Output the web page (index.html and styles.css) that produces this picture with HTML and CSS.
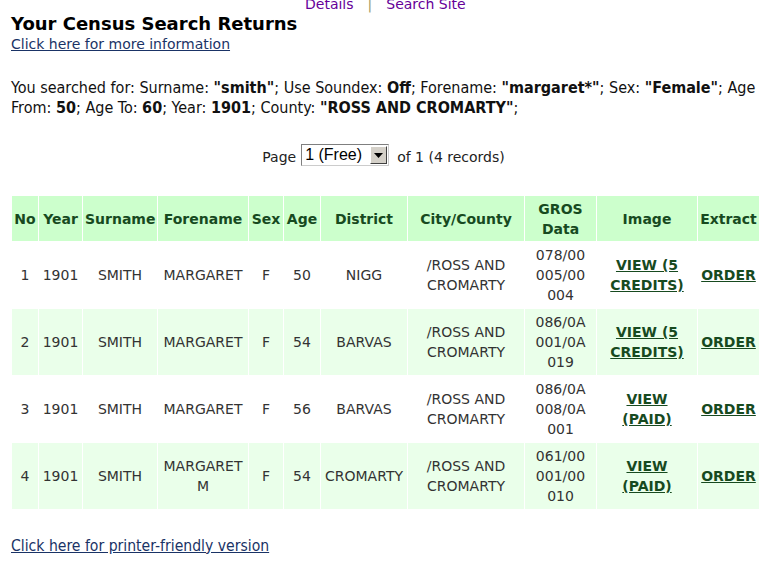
FILE: index.html
```html
<!DOCTYPE html>
<html>
<head>
<meta charset="utf-8">
<title>Your Census Search Returns</title>
<link rel="stylesheet" href="styles.css">
</head>
<body>
<div class="page">
  <div class="topnav">
    <a href="#" class="navlink">Details</a>
    <span class="sep">|</span>
    <a href="#" class="navlink">Search Site</a>
  </div>
  <h1 class="title">Your Census Search Returns</h1>
  <a href="#" class="infolink">Click here for more information</a>

  <p class="searched">You searched for: Surname: <b>"smith"</b>; Use Soundex: <b>Off</b>; Forename: <b>"margaret*"</b>; Sex: <b>"Female"</b>; Age From: <b>50</b>; Age To: <b>60</b>; Year: <b>1901</b>; County: <b>"ROSS AND CROMARTY"</b>;</p>

  <div class="pager">
    <span class="ptext">Page</span>
    <span class="select"><span class="selval">1 (Free)</span><span class="selbtn"><svg width="9" height="5" viewBox="0 0 9 5"><path d="M0 0H9L4.5 5Z" fill="#000"/></svg></span></span>
    <span class="ptext">of 1 (4 records)</span>
  </div>

  <table class="results">
    <thead>
      <tr>
        <th class="c-no">No</th>
        <th class="c-year">Year</th>
        <th class="c-sur">Surname</th>
        <th class="c-fore">Forename</th>
        <th class="c-sex">Sex</th>
        <th class="c-age">Age</th>
        <th class="c-dist">District</th>
        <th class="c-city">City/County</th>
        <th class="c-gros">GROS<br>Data</th>
        <th class="c-img">Image</th>
        <th class="c-ext">Extract</th>
      </tr>
    </thead>
    <tbody>
      <tr class="odd">
        <td>1</td><td>1901</td><td>SMITH</td><td>MARGARET</td><td>F</td><td>50</td><td>NIGG</td>
        <td>/ROSS AND<br>CROMARTY</td><td>078/00<br>005/00<br>004</td>
        <td><a href="#" class="act">VIEW (5<br>CREDITS)</a></td><td><a href="#" class="act">ORDER</a></td>
      </tr>
      <tr class="even">
        <td>2</td><td>1901</td><td>SMITH</td><td>MARGARET</td><td>F</td><td>54</td><td>BARVAS</td>
        <td>/ROSS AND<br>CROMARTY</td><td>086/0A<br>001/0A<br>019</td>
        <td><a href="#" class="act">VIEW (5<br>CREDITS)</a></td><td><a href="#" class="act">ORDER</a></td>
      </tr>
      <tr class="odd">
        <td>3</td><td>1901</td><td>SMITH</td><td>MARGARET</td><td>F</td><td>56</td><td>BARVAS</td>
        <td>/ROSS AND<br>CROMARTY</td><td>086/0A<br>008/0A<br>001</td>
        <td><a href="#" class="act">VIEW<br>(PAID)</a></td><td><a href="#" class="act">ORDER</a></td>
      </tr>
      <tr class="even">
        <td>4</td><td>1901</td><td>SMITH</td><td>MARGARET<br>M</td><td>F</td><td>54</td><td>CROMARTY</td>
        <td>/ROSS AND<br>CROMARTY</td><td>061/00<br>001/00<br>010</td>
        <td><a href="#" class="act">VIEW<br>(PAID)</a></td><td><a href="#" class="act">ORDER</a></td>
      </tr>
    </tbody>
  </table>

  <a href="#" class="printlink">Click here for printer-friendly version</a>
</div>
</body>
</html>
```

FILE: styles.css
```css
html, body {
  margin: 0;
  padding: 0;
  background: #ffffff;
}

.page {
  padding: 0 13px 0 11px;
  font-family: "DejaVu Sans", Verdana, sans-serif;
  font-size: 14px;
  color: #222222;
}

.topnav {
  margin-top: -4px;
  height: 14px;
  line-height: 17px;
  padding-left: 294px;
  display: flex;
  gap: 14px;
  font-size: 14px;
}

.navlink {
  color: #660099;
  text-decoration: none;
}

.sep {
  color: #999966;
}

.title {
  margin: 4px 0 0 0;
  font-size: 18px;
  line-height: 20px;
  font-weight: bold;
  color: #000000;
}

.infolink,
.printlink {
  display: inline-block;
  color: #1a3366;
  text-decoration: underline;
  font-size: 14px;
  line-height: 17px;
}

.infolink {
  margin-top: 2px;
}

.searched {
  margin: 25px 0 0 0;
  font-family: "DejaVu Sans Condensed", Tahoma, sans-serif;
  font-size: 16px;
  line-height: 20px;
  color: #111111;
}

.pager {
  margin-top: 26px;
  display: flex;
  justify-content: center;
  align-items: flex-end;
  gap: 5px;
  font-size: 14px;
  padding-right: 4px;
}

.ptext {
  line-height: 17px;
}

.select {
  display: inline-flex;
  align-items: stretch;
  width: 88px;
  height: 22px;
  border: 1px solid #7f7f7f;
  border-right-color: #cccccc;
  border-bottom-color: #cccccc;
  background: #ffffff;
  box-sizing: border-box;
  margin: 0 3px 0 0;
}

.selval {
  flex: 1;
  font-family: "Liberation Sans", Arial, sans-serif;
  font-size: 16px;
  line-height: 19px;
  padding: 0 0 0 3px;
  color: #000;
  white-space: nowrap;
}

.selbtn {
  width: 15px;
  margin: 1px;
  background: #d4d0c8;
  border: 1px solid;
  border-color: #ffffff #404040 #404040 #ffffff;
  display: flex;
  align-items: center;
  justify-content: center;
}

.results {
  margin-top: 29px;
  border-collapse: separate;
  border-spacing: 1px;
  table-layout: fixed;
  width: 749px;
  text-align: center;
}

.results th,
.results td {
  box-sizing: border-box;
  padding: 0 2px;
  line-height: 20px;
}

.results th {
  background: #ccffcc;
  color: #174a1f;
  font-weight: bold;
  font-size: 14px;
  height: 45px;
}

.results td {
  height: 66px;
  color: #333333;
  font-size: 14px;
}

.results tr.even td {
  background: #eaffea;
}

.c-no { width: 26px; }
.c-year { width: 43px; }
.c-sur { width: 74px; }
.c-fore { width: 90px; }
.c-sex { width: 34px; }
.c-age { width: 36px; }
.c-dist { width: 86px; }
.c-city { width: 116px; }
.c-gros { width: 71px; }
.c-img { width: 100px; }
.c-ext { width: 61px; }

.act {
  color: #174a1f;
  font-weight: bold;
  text-decoration: underline;
  font-size: 14px;
}

.printlink {
  margin-top: 28px;
  font-family: "DejaVu Sans Condensed", Tahoma, sans-serif;
  font-size: 15.6px;
}
```
